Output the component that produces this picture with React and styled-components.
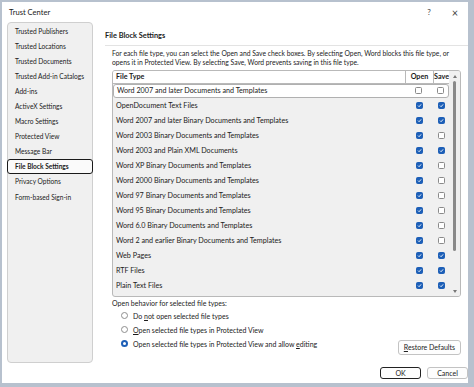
import styled, { createGlobalStyle } from "styled-components";

const GlobalStyle = createGlobalStyle`
  html, body {
    margin: 0;
    padding: 0;
    background: #b7c1ce;
    width: 474px;
    height: 387px;
    overflow: hidden;
  }
  body {
    font-family: Lato, "Open Sans", sans-serif;
    color: #1b1b1b;
  }
`;

// Dialog frame
const Window = styled.div`
  margin: 2px 0 0 2px;
  width: 466px;
  height: 381px;
  background: #fff;
  display: flex;
  flex-direction: column;
  box-sizing: border-box;
`;

const TitleBar = styled.div`
  height: 20px;
  display: flex;
  align-items: center;
  padding: 0 0 0 7px;
  font-size: 7.6px;
`;

const TitleText = styled.div`
  flex: 1;
`;

const TitleButton = styled.div`
  width: 26px;
  text-align: center;
  font-size: ${(p) => (p.big ? "11px" : "8px")};
  color: #444;
`;

const Body = styled.div`
  flex: 1;
  display: flex;
  padding-left: 5px;
  min-width: 0;
`;

const Nav = styled.div`
  width: 86px;
  flex: none;
  height: 341px;
  box-sizing: border-box;
  background: #f0f0f0;
  border: 1px solid #cfcfcf;
  border-radius: 4px;
  padding-top: 0;
  display: flex;
  flex-direction: column;
`;

const NavItem = styled.div`
  height: 15.1px;
  display: flex;
  align-items: center;
  padding-left: 7px;
  margin: 0 ${(p) => (p.active ? "-1px" : "0")};
  font-size: 6.6px;
  white-space: nowrap;
  color: #222;
  box-sizing: border-box;
  border: ${(p) => (p.active ? "1.5px solid #1a1a1a" : "none")};
  border-radius: 3px;
  background: ${(p) => (p.active ? "#fafafa" : "transparent")};
  font-weight: ${(p) => (p.active ? 700 : 400)};
`;

const Content = styled.div`
  flex: 1;
  min-width: 0;
  margin-left: 12px;
  display: flex;
  flex-direction: column;
`;

const Heading = styled.div`
  font-size: 7.4px;
  font-weight: 700;
  margin-top: 8px;
  height: 11px;
  line-height: 11px;
  padding-bottom: 4px;
  border-bottom: 1px solid #e3e3e3;
`;

const Inner = styled.div`
  padding-left: 7px;
  padding-right: 7px;
  display: flex;
  flex-direction: column;
`;

const Paragraph = styled.div`
  font-size: 6.75px;
  line-height: 9.4px;
  margin-top: 3px;
  white-space: nowrap;
`;

const TableBox = styled.div`
  margin-top: 2px;
  height: 227px;
  border: 1px solid #b9b9b9;
  border-radius: 3px;
  background: #f0f0f0;
  display: flex;
  box-sizing: border-box;
  overflow: hidden;
`;

const TableBody = styled.div`
  flex: 1;
  min-width: 0;
  display: flex;
  flex-direction: column;
`;

const Row = styled.div`
  display: grid;
  grid-template-columns: 1fr 28px 16px;
  height: ${(p) => (p.head ? "13px" : p.first ? "14px" : "15px")};
  align-items: center;
  box-sizing: border-box;
  background: ${(p) => (p.head || p.first ? "#fff" : "transparent")};
  border-bottom: ${(p) => (p.head ? "1px solid #b9b9b9" : "none")};
  border: ${(p) => (p.first ? "1px solid #b0b0b0" : undefined)};
  border-radius: ${(p) => (p.first ? "3px" : "0")};
  font-size: 7.2px;
  font-weight: ${(p) => (p.head ? 700 : 400)};
`;

const Cell = styled.div`
  height: 100%;
  display: flex;
  align-items: center;
  justify-content: ${(p) => (p.center ? "center" : "flex-start")};
  padding-left: ${(p) => (p.center ? "0" : "3px")};
  border-left: ${(p) => (p.divider ? "1px solid #b9b9b9" : "none")};
  white-space: nowrap;
  box-sizing: border-box;
`;

const Check = styled.div`
  width: 7px;
  height: 7px;
  border-radius: 1.5px;
  box-sizing: border-box;
  background: ${(p) => (p.on ? "#1d5fb7" : "#fff")};
  border: 1px solid ${(p) => (p.on ? "#1d5fb7" : "#8a8a8a")};
  display: flex;
  align-items: center;
  justify-content: center;
`;

const ScrollBar = styled.div`
  width: 11px;
  flex: none;
  display: flex;
  flex-direction: column;
  align-items: center;
  background: #f0f0f0;
  padding: 4px 0 3px;
  box-sizing: border-box;
`;

const Thumb = styled.div`
  width: 3px;
  height: 170px;
  margin: 3px 0;
  border-radius: 2px;
  background: #8a8a8a;
`;

const Spacer = styled.div`
  flex: 1;
`;

const Arrow = styled.div`
  width: 0;
  height: 0;
  border-left: 2.5px solid transparent;
  border-right: 2.5px solid transparent;
  ${(p) =>
    p.down
      ? "border-top: 3px solid #777;"
      : "border-bottom: 3px solid #777;"}
`;

const Label = styled.div`
  font-size: 7px;
  margin-top: 1px;
  height: 10px;
  line-height: 10px;
`;

const BottomRow = styled.div`
  display: flex;
  align-items: flex-start;
`;

const RadioGroup = styled.div`
  flex: 1;
  display: flex;
  flex-direction: column;
  padding-left: 9px;
  padding-top: 1px;
`;

const RadioRow = styled.div`
  height: 14px;
  display: flex;
  align-items: center;
  gap: 5px;
  font-size: 7px;
`;

const Radio = styled.div`
  width: 7px;
  height: 7px;
  border-radius: 50%;
  box-sizing: border-box;
  border: ${(p) => (p.on ? "2px solid #1d5fb7" : "1px solid #8e8e8e")};
  background: #fff;
`;

const Button = styled.div`
  height: ${(p) => (p.tall ? "15px" : "12px")};
  padding: 0 ${(p) => (p.wide ? "5px" : "0")};
  width: ${(p) => (p.wide ? "auto" : "41px")};
  display: flex;
  align-items: center;
  justify-content: center;
  box-sizing: border-box;
  border: ${(p) => (p.primary ? "1.5px solid #222" : "1px solid #c3c3c3")};
  border-radius: 3px;
  background: #fdfdfd;
  font-size: 7px;
  color: #222;
  margin-top: ${(p) => p.top || 0};
`;

const Footer = styled.div`
  display: flex;
  justify-content: flex-end;
  gap: 6px;
  margin-top: auto;
  padding: 0 0 4px;
`;

const U = styled.span`
  text-decoration: underline;
`;

const CheckMark = () => (
  <svg width="5" height="5" viewBox="0 0 10 10">
    <path d="M2 5.2 L4.2 7.4 L8.2 2.8" fill="none" stroke="#fff" strokeWidth="1.8" />
  </svg>
);

const navItems = [
  "Trusted Publishers",
  "Trusted Locations",
  "Trusted Documents",
  "Trusted Add-in Catalogs",
  "Add-ins",
  "ActiveX Settings",
  "Macro Settings",
  "Protected View",
  "Message Bar",
  "File Block Settings",
  "Privacy Options",
  "Form-based Sign-in",
];

const fileTypes = [
  { name: "Word 2007 and later Documents and Templates", open: false, save: false },
  { name: "OpenDocument Text Files", open: true, save: true },
  { name: "Word 2007 and later Binary Documents and Templates", open: true, save: true },
  { name: "Word 2003 Binary Documents and Templates", open: true, save: false },
  { name: "Word 2003 and Plain XML Documents", open: true, save: true },
  { name: "Word XP Binary Documents and Templates", open: true, save: false },
  { name: "Word 2000 Binary Documents and Templates", open: true, save: false },
  { name: "Word 97 Binary Documents and Templates", open: true, save: false },
  { name: "Word 95 Binary Documents and Templates", open: true, save: false },
  { name: "Word 6.0 Binary Documents and Templates", open: true, save: false },
  { name: "Word 2 and earlier Binary Documents and Templates", open: true, save: false },
  { name: "Web Pages", open: true, save: true },
  { name: "RTF Files", open: true, save: true },
  { name: "Plain Text Files", open: true, save: true },
];

const Box = ({ on }) => <Check on={on}>{on && <CheckMark />}</Check>;

const App = () => {
  return (
    <>
      <GlobalStyle />
      <Window>
        <TitleBar>
          <TitleText>Trust Center</TitleText>
          <TitleButton>?</TitleButton>
          <TitleButton big>×</TitleButton>
        </TitleBar>
        <Body>
          <Nav>
            {navItems.map((item) => (
              <NavItem key={item} active={item === "File Block Settings"}>
                {item}
              </NavItem>
            ))}
          </Nav>
          <Content>
            <Heading>File Block Settings</Heading>
            <Inner>
              <Paragraph>
                For each file type, you can select the Open and Save check boxes. By selecting Open, Word blocks this file type, or
                <br />
                opens it in Protected View. By selecting Save, Word prevents saving in this file type.
              </Paragraph>
              <TableBox>
                <TableBody>
                  <Row head>
                    <Cell>File Type</Cell>
                    <Cell center divider>Open</Cell>
                    <Cell center divider>Save</Cell>
                  </Row>
                  {fileTypes.map((f, i) => (
                    <Row key={f.name} first={i === 0}>
                      <Cell>{f.name}</Cell>
                      <Cell center>
                        <Box on={f.open} />
                      </Cell>
                      <Cell center>
                        <Box on={f.save} />
                      </Cell>
                    </Row>
                  ))}
                </TableBody>
                <ScrollBar>
                  <Arrow />
                  <Thumb />
                  <Spacer />
                  <Arrow down />
                </ScrollBar>
              </TableBox>
              <Label>Open behavior for selected file types:</Label>
              <BottomRow>
                <RadioGroup>
                  <RadioRow>
                    <Radio />
                    <span>
                      Do <U>n</U>ot open selected file types
                    </span>
                  </RadioRow>
                  <RadioRow>
                    <Radio />
                    <span>
                      <U>O</U>pen selected file types in Protected View
                    </span>
                  </RadioRow>
                  <RadioRow>
                    <Radio on />
                    <span>
                      Open selected file types in Protected View and allow <U>e</U>diting
                    </span>
                  </RadioRow>
                </RadioGroup>
                <Button wide tall top="32px">
                  <span>
                    <U>R</U>estore Defaults
                  </span>
                </Button>
              </BottomRow>
            </Inner>
            <Footer>
              <Button primary>OK</Button>
              <Button>Cancel</Button>
            </Footer>
          </Content>
        </Body>
      </Window>
    </>
  );
};

export default App;
